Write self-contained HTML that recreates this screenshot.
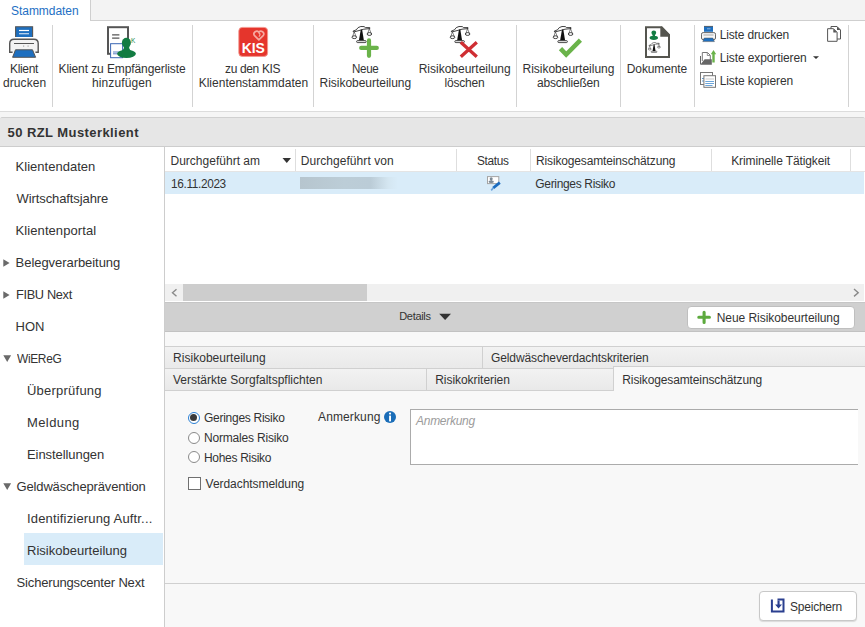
<!DOCTYPE html>
<html lang="de"><head><meta charset="utf-8"><title>Stammdaten</title>
<style>
html,body{margin:0;padding:0}
body{width:865px;height:627px;position:relative;overflow:hidden;background:#fff;font-family:"Liberation Sans",sans-serif;color:#333}
.a{position:absolute}
.t{position:absolute;white-space:pre;color:#333}
.vs{position:absolute;top:25px;height:82px;width:1px;background:#d3d3d3}
svg{position:absolute;overflow:visible}
</style></head><body>
<!-- tab strip -->
<div class="a" style="left:0;top:0;width:865px;height:20px;background:#f3f3f3;border-bottom:1px solid #cfcfcf"></div>
<div class="a" style="left:0;top:0;width:90px;height:21px;background:#fff;border-right:1px solid #cfcfcf"></div>
<!-- ribbon -->
<div class="a" style="left:0;top:111px;width:865px;height:1px;background:#dcdcdc"></div>
<div class="a" style="left:0;top:112px;width:865px;height:5px;background:#f5f5f5"></div>
<div class="vs" style="left:52px"></div><div class="vs" style="left:192px"></div><div class="vs" style="left:313px"></div>
<div class="vs" style="left:516px"></div><div class="vs" style="left:620px"></div><div class="vs" style="left:694px"></div><div class="vs" style="left:848px"></div>
<!-- title bar -->
<div class="a" style="left:0;top:117px;width:865px;height:30px;background:#e6e6e6;border-top:1px solid #d0d0d0;border-bottom:1px solid #cdcdcd;box-sizing:border-box;border-radius:2px 2px 0 0"></div>
<!-- sidebar -->
<div class="a" style="left:164px;top:147px;width:1px;height:480px;background:#cdcdcd"></div>
<div class="a" style="left:24px;top:533px;width:139px;height:32px;background:#d9ecf9"></div>
<!-- grid -->
<div class="a" style="left:165px;top:171px;width:700px;height:1px;background:#e4e4e4"></div>
<div class="a" style="left:165px;top:172px;width:699px;height:22px;background:#d9ecf9"></div>
<div class="a" style="left:295px;top:149px;width:1px;height:22px;background:#dedede"></div>
<div class="a" style="left:456px;top:149px;width:1px;height:22px;background:#dedede"></div>
<div class="a" style="left:530px;top:149px;width:1px;height:22px;background:#dedede"></div>
<div class="a" style="left:711px;top:149px;width:1px;height:22px;background:#dedede"></div>
<div class="a" style="left:850px;top:149px;width:1px;height:22px;background:#dedede"></div>
<div class="a" style="left:300px;top:177px;width:98px;height:12px;background:linear-gradient(90deg,#b6c5ce 0,#bccdd7 45%,#bbccd7 72%,#d4e6f1 90%,#d9ecf9 100%)"></div>
<!-- scrollbar -->
<div class="a" style="left:165px;top:284px;width:699px;height:17px;background:#f0f0f0"></div>
<div class="a" style="left:183px;top:284px;width:184px;height:17px;background:#cdcdcd"></div>
<!-- details bar -->
<div class="a" style="left:165px;top:302px;width:700px;height:30px;background:#d0d0d0;border-top:1px solid #c6c6c6;border-bottom:1px solid #c2c2c2;box-sizing:border-box"></div>
<div class="a" style="left:687px;top:305.5px;width:168px;height:23px;background:#fff;border:1px solid #bfbfbf;border-radius:4px;box-sizing:border-box"></div>
<!-- lower panel -->
<div class="a" style="left:165px;top:332px;width:700px;height:295px;background:#f8f8f8"></div>
<div class="a" style="left:165px;top:346px;width:449px;height:23px;background:linear-gradient(#f2f2f2,#e9e9e9);border-top:1px solid #d0d0d0;box-sizing:border-box"></div>
<div class="a" style="left:613px;top:346px;width:252px;height:21px;background:linear-gradient(#f2f2f2,#eaeaea);border-top:1px solid #d0d0d0;border-bottom:1px solid #d0d0d0;box-sizing:border-box"></div>
<div class="a" style="left:482px;top:347px;width:1px;height:21px;background:#d0d0d0"></div>
<div class="a" style="left:165px;top:368px;width:449px;height:23px;background:linear-gradient(#f2f2f2,#e9e9e9);border-top:1px solid #d0d0d0;border-bottom:1px solid #d0d0d0;box-sizing:border-box"></div>
<div class="a" style="left:426px;top:369px;width:1px;height:21px;background:#d0d0d0"></div>
<div class="a" style="left:613px;top:367px;width:1px;height:24px;background:#d0d0d0"></div>
<!-- form -->
<div class="a" style="left:187.6px;top:411.6px;width:12px;height:12px;border:1px solid #2a7fd4;border-radius:50%;box-sizing:border-box;background:#fff"></div>
<div class="a" style="left:190.1px;top:414.1px;width:7px;height:7px;border-radius:50%;background:#3a3a3a"></div>
<div class="a" style="left:187.6px;top:431.7px;width:12px;height:12px;border:1px solid #8a8a8a;border-radius:50%;box-sizing:border-box;background:#fff"></div>
<div class="a" style="left:187.6px;top:451.4px;width:12px;height:12px;border:1px solid #8a8a8a;border-radius:50%;box-sizing:border-box;background:#fff"></div>
<div class="a" style="left:188px;top:477px;width:13px;height:13px;border:1px solid #707070;box-sizing:border-box;background:#fff"></div>
<div class="a" style="left:410px;top:409px;width:448px;height:56px;border:1px solid #ababab;border-right:0;box-sizing:border-box;background:#fff"></div>
<!-- bottom bar -->
<div class="a" style="left:165px;top:583px;width:700px;height:1px;background:#d0d0d0"></div>
<div class="a" style="left:759px;top:591px;width:98px;height:30px;background:#fff;border:1px solid #c8c8c8;border-radius:4px;box-sizing:border-box;box-shadow:0 1px 1px rgba(0,0,0,.12)"></div>
<svg style="left:0;top:0" width="865" height="627" viewBox="0 0 865 627">
<defs>
<symbol id="sc" overflow="visible">
<path d="M1.2 5.2 L4.5 3.8 L6.3 1.6 L9 .5 L12.3 .6 L13.6 1.6 L18 1.6 L18 2.6 L12 3.2 L9.6 3.9 L1.8 6Z" fill="#fff" stroke="#111" stroke-width=".8" stroke-linejoin="round"/>
<path d="M2.4 5.8 L.8 10.6 M2.4 5.8 L4.3 10.6 M17.5 2.6 L16 7.3 M17.5 2.6 L19.3 7.3" stroke="#222" stroke-width=".55" fill="none"/>
<ellipse cx="2.5" cy="11.2" rx="2.3" ry="1.4" fill="#fff" stroke="#111" stroke-width=".8"/>
<ellipse cx="17.6" cy="8" rx="2.3" ry="1.4" fill="#fff" stroke="#111" stroke-width=".8"/>
<path d="M9 3.6 L10.3 3.6 L12.1 14.6 L7.1 14.6Z" fill="#111"/>
<rect x="4.8" y="14.6" width="9.6" height="2" rx="1" fill="#e8e8e8" stroke="#222" stroke-width=".8"/>
</symbol>
</defs>
<!-- printer -->
<rect x="15.6" y="26.7" width="17" height="10.3" fill="#1e6fbf"/>
<path d="M15.6 37 V26.7 H32.6 V37" fill="none" stroke="#555" stroke-width="1.1"/>
<path d="M19 30.5 H29" stroke="#fff" stroke-width="1.2"/><path d="M19 33.7 H29" stroke="#c9dcf0" stroke-width="1.2"/>
<path d="M12.6 52.3 H9.7 V43.5 Q9.7 39.2 14 39.2 H34 Q38.2 39.2 38.2 43.5 V52.3 H35.4" fill="#f3f3f3" stroke="#555" stroke-width="1.4"/>
<path d="M14 43.5 H34" stroke="#555" stroke-width="1"/>
<rect x="23" y="45.5" width="1.2" height="1.2" fill="#aaa"/><rect x="27.5" y="45.5" width="1.2" height="1.2" fill="#aaa"/>
<path d="M15.5 49.8 H32.5 L35.6 57.3 H12.6Z" fill="#1e6fbf" stroke="#555" stroke-width="1"/>
<!-- doc + person -->
<rect x="108" y="27.2" width="20" height="26.6" fill="#fff" stroke="#555" stroke-width="2"/>
<path d="M112.1 34.9 H119.4 M112.1 38.1 H119.4" stroke="#555" stroke-width="1.3"/>
<rect x="110.6" y="43.7" width="12" height="14" fill="#fff" stroke="#3a66b3" stroke-width="1"/>
<path d="M113 52 H120 M113 53.8 H120" stroke="#5b80c4" stroke-width="1"/>
<ellipse cx="126.4" cy="42.7" rx="4.5" ry="4.9" fill="#127c42"/>
<path d="M123.6 45.5 Q124.8 48 122.6 50.6 H130.4 Q128.4 48 129.4 45.5Z" fill="#127c42"/>
<ellipse cx="126.5" cy="53.8" rx="9.4" ry="4.1" fill="#127c42"/>
<text x="131" y="42.7" font-family="Liberation Sans, sans-serif" font-size="6.5" fill="#1d8a4e">K</text>
<!-- KIS -->
<rect x="238.8" y="27.4" width="28.8" height="29" rx="3.5" fill="#e5352c" stroke="#f4978e" stroke-width=".9"/>
<path d="M258.85 39.9 L254.3 35.4 A2.8 2.8 0 0 1 258.85 32.2 A2.8 2.8 0 0 1 263.4 35.4Z" fill="none" stroke="#f6a8a0" stroke-width="1.7" stroke-linejoin="round"/>
<path d="M258.6 32.6 q2.6 1.6 .3 4" fill="none" stroke="#f6a8a0" stroke-width="1.3"/>
<text x="241.7" y="52.6" font-family="Liberation Sans, sans-serif" font-weight="bold" font-size="14" fill="#fff" textLength="23.2" lengthAdjust="spacingAndGlyphs">KIS</text>
<!-- neue -->
<use href="#sc" x="351.8" y="26"/>
<path d="M361.2 47.9 H376.8 M369 40.4 V55.8" stroke="#6ab34a" stroke-width="4.2" stroke-linecap="round"/>
<!-- loeschen -->
<use href="#sc" x="450" y="26"/>
<path d="M460.8 42.2 L476.8 56.8 M476.8 42.2 L460.8 56.8" stroke="#cf2e33" stroke-width="3.3"/>
<!-- abschliessen -->
<use href="#sc" x="553" y="26"/>
<path d="M560.5 48.6 L566.2 54.6 L580.4 40.2" fill="none" stroke="#6ab34a" stroke-width="4.5"/>
<!-- dokumente -->
<path d="M646 27.2 H661.6 L669 34.8 V56.9 H646Z" fill="#fff" stroke="#55554f" stroke-width="2"/>
<path d="M660.3 27.2 L661.9 26.4 L669.8 34.5 V36.7 H660.3Z" fill="#55554f"/>
<circle cx="653.8" cy="32.8" r="2.4" fill="#127c42"/><rect x="652.6" y="34" width="2.4" height="3" fill="#127c42"/>
<ellipse cx="653.8" cy="37.8" rx="4.2" ry="2.1" fill="#127c42"/>
<g transform="translate(648.2 42.3) scale(.61)"><use href="#sc"/></g>
<!-- liste drucken -->
<rect x="704" y="26.2" width="9" height="5.6" fill="#1e6fbf"/><path d="M704 26.4 H713" stroke="#555" stroke-width=".8"/>
<path d="M707 28.8 H710.5" stroke="#8db4dd" stroke-width="1"/>
<rect x="701.5" y="32.6" width="14" height="7" rx="1.6" fill="#f6f6f6" stroke="#666" stroke-width="1"/>
<path d="M703.5 35 H713.5" stroke="#888" stroke-width=".7"/>
<path d="M704.2 38 H712.8 L714.4 41.6 H702.8Z" fill="#1e6fbf" stroke="#555" stroke-width=".5"/>
<!-- liste exportieren -->
<path d="M702.3 61 V52.5 H707.5 L710.3 55.3 V60" fill="#fff" stroke="#777" stroke-width="1"/>
<path d="M707.3 52.8 V55.5 H710" fill="none" stroke="#777" stroke-width=".8"/>
<path d="M700.5 56 V64.3" stroke="#666" stroke-width="1"/>
<path d="M700.3 64.7 L704.6 59.3 H711.8 V64.7Z" fill="#666"/>
<path d="M713.5 50 L716.2 54.2 H714.7 V62.6 H712.3 V54.2 H710.8Z" fill="#6ab34a"/>
<!-- liste kopieren -->
<rect x="700.5" y="72.5" width="12" height="12" fill="#fff" stroke="#777" stroke-width="1"/>
<path d="M702 78.5 H704 M702 81 H704" stroke="#5b9bd5" stroke-width="1"/>
<rect x="703.9" y="75.7" width="11.6" height="11.6" fill="#fff" stroke="#777" stroke-width="1"/>
<path d="M705.5 79 H714" stroke="#bbb" stroke-width=".8"/>
<path d="M705.3 81.5 H714 M705.3 83.5 H714 M705.3 85.5 H712.5" stroke="#5b9bd5" stroke-width=".9"/>
<!-- pages -->
<path d="M831 39 V26.5 H837 L840.5 30 V39Z" fill="#fff" stroke="#555" stroke-width="1"/><path d="M837 26.5 V30 H840.5Z" fill="#555"/>
<path d="M827.6 28.7 H833.5 L837.1 32.3 V41.3 H827.6Z" fill="#fff" stroke="#555" stroke-width="1"/><path d="M833.3 28.7 V32.5 H837.1Z" fill="#555"/>
<path d="M813 56.2 H819 L816 59Z" fill="#333"/>
<!-- sort / details arrows -->
<path d="M282.5 158 H291 L286.75 163Z" fill="#333"/>
<path d="M439.2 313.7 H451 L445.1 320Z" fill="#333"/>
<!-- sidebar triangles -->
<path d="M3.3 259.2 L9.6 263 L3.3 266.8Z M3.3 291.2 L9.6 295 L3.3 298.8Z" fill="#6a6a6a"/>
<path d="M3.3 355.3 H11.1 L7.2 362Z M3.3 483.3 H11.1 L7.2 490Z" fill="#6a6a6a"/>
<!-- scroll arrows -->
<path d="M176.5 289.2 L172.5 292.7 L176.5 296.2" fill="none" stroke="#8a8a8a" stroke-width="1.4"/>
<path d="M854 289 L858.2 292.7 L854 296.4" fill="none" stroke="#8a8a8a" stroke-width="1.4"/>
<!-- status icon -->
<rect x="487.5" y="176.6" width="11.3" height="7" fill="#fff" stroke="#a4a4a4" stroke-width="1"/>
<circle cx="491.2" cy="178.7" r="1.5" fill="#7d8a96"/><rect x="490.6" y="179.5" width="1.2" height="1.8" fill="#7d8a96"/><ellipse cx="491.2" cy="181.8" rx="2.7" ry="1.3" fill="#7d8a96"/>
<path d="M499.8 182.6 L493.2 188" stroke="#1a6bbf" stroke-width="2.9"/><path d="M493.4 187.8 L491.2 190.4" stroke="#6ba3dc" stroke-width="1.7"/>
<!-- small plus -->
<path d="M698.8 317.3 H709.4 M704.1 312.2 V322.4" stroke="#5daa3e" stroke-width="3.1" stroke-linecap="round"/>
<!-- info -->
<circle cx="390" cy="417" r="6" fill="#1a6db8"/><rect x="389.1" y="415.6" width="1.9" height="5.8" fill="#fff"/><circle cx="390.05" cy="413.6" r="1.1" fill="#fff"/>
<!-- save -->
<path d="M777.5 599.5 H783.5 V611.4 H771.9 V599.5" fill="none" stroke="#2a3f8f" stroke-width="2"/>
<path d="M777.5 600.5 H779.6 V604.6 H782 L778.55 608.6 L775.1 604.6 H777.5Z" fill="#2a3f8f"/>
</svg>

<span class="t" style="left:11.0px;top:2.6px;font-size:12px;line-height:16px;letter-spacing:-0.040px;color:#1e6fc4">Stammdaten</span>
<span class="t" style="left:10.0px;top:61.0px;font-size:12px;line-height:16px;letter-spacing:-0.337px;">Klient</span>
<span class="t" style="left:3.0px;top:75.0px;font-size:12px;line-height:16px;letter-spacing:0.080px;">drucken</span>
<span class="t" style="left:58.5px;top:61.0px;font-size:12px;line-height:16px;letter-spacing:-0.097px;">Klient zu Empfängerliste</span>
<span class="t" style="left:92.0px;top:75.0px;font-size:12px;line-height:16px;letter-spacing:0.106px;">hinzufügen</span>
<span class="t" style="left:225.0px;top:61.0px;font-size:12px;line-height:16px;letter-spacing:-0.350px;;transform:scaleX(0.9991);transform-origin:0 0">zu den KIS</span>
<span class="t" style="left:198.7px;top:75.0px;font-size:12px;line-height:16px;letter-spacing:0.005px;">Klientenstammdaten</span>
<span class="t" style="left:352.0px;top:61.0px;font-size:12px;line-height:16px;letter-spacing:-0.350px;;transform:scaleX(0.9655);transform-origin:0 0">Neue</span>
<span class="t" style="left:319.5px;top:75.0px;font-size:12px;line-height:16px;letter-spacing:-0.024px;">Risikobeurteilung</span>
<span class="t" style="left:418.7px;top:61.0px;font-size:12px;line-height:16px;letter-spacing:-0.005px;">Risikobeurteilung</span>
<span class="t" style="left:444.5px;top:75.0px;font-size:12px;line-height:16px;letter-spacing:-0.198px;">löschen</span>
<span class="t" style="left:522.5px;top:61.0px;font-size:12px;line-height:16px;letter-spacing:-0.011px;">Risikobeurteilung</span>
<span class="t" style="left:537.0px;top:75.0px;font-size:12px;line-height:16px;letter-spacing:-0.203px;">abschließen</span>
<span class="t" style="left:626.8px;top:61.0px;font-size:12px;line-height:16px;letter-spacing:-0.124px;">Dokumente</span>
<span class="t" style="left:719.7px;top:27.0px;font-size:12px;line-height:16px;letter-spacing:-0.150px;">Liste drucken</span>
<span class="t" style="left:719.7px;top:50.0px;font-size:12px;line-height:16px;letter-spacing:-0.109px;">Liste exportieren</span>
<span class="t" style="left:719.7px;top:73.0px;font-size:12px;line-height:16px;letter-spacing:-0.095px;">Liste kopieren</span>
<span class="t" style="left:7.6px;top:123.7px;font-size:13px;line-height:17px;letter-spacing:0.422px;font-weight:bold">50 RZL Musterklient</span>
<span class="t" style="left:170.5px;top:153.0px;font-size:12px;line-height:16px;letter-spacing:0.009px;">Durchgeführt am</span>
<span class="t" style="left:300.7px;top:153.0px;font-size:12px;line-height:16px;letter-spacing:0.062px;">Durchgeführt von</span>
<span class="t" style="left:477.2px;top:153.0px;font-size:12px;line-height:16px;letter-spacing:-0.350px;;transform:scaleX(0.9854);transform-origin:0 0">Status</span>
<span class="t" style="left:536.0px;top:153.0px;font-size:12px;line-height:16px;letter-spacing:-0.146px;">Risikogesamteinschätzung</span>
<span class="t" style="left:731.2px;top:153.0px;font-size:12px;line-height:16px;letter-spacing:-0.118px;">Kriminelle Tätigkeit</span>
<span class="t" style="left:170.5px;top:175.5px;font-size:12px;line-height:16px;letter-spacing:-0.350px;;transform:scaleX(0.9850);transform-origin:0 0">16.11.2023</span>
<span class="t" style="left:535.3px;top:175.5px;font-size:12px;line-height:16px;letter-spacing:-0.330px;">Geringes Risiko</span>
<span class="t" style="left:399.2px;top:308.9px;font-size:11px;line-height:15px;letter-spacing:-0.304px;">Details</span>
<span class="t" style="left:716.7px;top:309.7px;font-size:12px;line-height:16px;letter-spacing:-0.052px;">Neue Risikobeurteilung</span>
<span class="t" style="left:173.0px;top:349.7px;font-size:12px;line-height:16px;letter-spacing:0.039px;">Risikobeurteilung</span>
<span class="t" style="left:491.0px;top:349.7px;font-size:12px;line-height:16px;letter-spacing:-0.114px;">Geldwäscheverdachtskriterien</span>
<span class="t" style="left:173.0px;top:371.8px;font-size:12px;line-height:16px;letter-spacing:-0.001px;">Verstärkte Sorgfaltspflichten</span>
<span class="t" style="left:435.2px;top:371.8px;font-size:12px;line-height:16px;letter-spacing:-0.048px;">Risikokriterien</span>
<span class="t" style="left:622.3px;top:371.8px;font-size:12px;line-height:16px;letter-spacing:-0.125px;">Risikogesamteinschätzung</span>
<span class="t" style="left:204.0px;top:409.5px;font-size:12px;line-height:16px;letter-spacing:-0.273px;">Geringes Risiko</span>
<span class="t" style="left:204.0px;top:429.5px;font-size:12px;line-height:16px;letter-spacing:-0.191px;">Normales Risiko</span>
<span class="t" style="left:204.0px;top:449.5px;font-size:12px;line-height:16px;letter-spacing:-0.302px;">Hohes Risiko</span>
<span class="t" style="left:205.6px;top:475.7px;font-size:12px;line-height:16px;letter-spacing:-0.048px;">Verdachtsmeldung</span>
<span class="t" style="left:318.0px;top:409.0px;font-size:12px;line-height:16px;letter-spacing:0.126px;">Anmerkung</span>
<span class="t" style="left:416.0px;top:413.0px;font-size:12px;line-height:16px;letter-spacing:-0.274px;font-style:italic;color:#9c9c9c">Anmerkung</span>
<span class="t" style="left:790.0px;top:598.5px;font-size:12px;line-height:16px;letter-spacing:-0.220px;">Speichern</span>
<span class="t" style="left:15.6px;top:157.8px;font-size:13px;line-height:17px;letter-spacing:0.010px;">Klientendaten</span>
<span class="t" style="left:16.6px;top:189.8px;font-size:13px;line-height:17px;letter-spacing:-0.104px;">Wirtschaftsjahre</span>
<span class="t" style="left:15.6px;top:221.8px;font-size:13px;line-height:17px;letter-spacing:0.076px;">Klientenportal</span>
<span class="t" style="left:15.6px;top:253.8px;font-size:13px;line-height:17px;letter-spacing:-0.055px;">Belegverarbeitung</span>
<span class="t" style="left:15.6px;top:285.8px;font-size:13px;line-height:17px;letter-spacing:-0.350px;;transform:scaleX(0.9833);transform-origin:0 0">FIBU Next</span>
<span class="t" style="left:15.6px;top:317.8px;font-size:13px;line-height:17px;letter-spacing:-0.050px;">HON</span>
<span class="t" style="left:16.6px;top:349.8px;font-size:13px;line-height:17px;letter-spacing:-0.350px;;transform:scaleX(0.9159);transform-origin:0 0">WiEReG</span>
<span class="t" style="left:27.0px;top:381.8px;font-size:13px;line-height:17px;letter-spacing:0.226px;">Überprüfung</span>
<span class="t" style="left:27.0px;top:413.8px;font-size:13px;line-height:17px;letter-spacing:0.394px;">Meldung</span>
<span class="t" style="left:27.0px;top:445.8px;font-size:13px;line-height:17px;letter-spacing:-0.069px;">Einstellungen</span>
<span class="t" style="left:16.6px;top:477.8px;font-size:13px;line-height:17px;letter-spacing:-0.164px;">Geldwäscheprävention</span>
<span class="t" style="left:27.0px;top:509.8px;font-size:13px;line-height:17px;letter-spacing:0.169px;">Identifizierung Auftr...</span>
<span class="t" style="left:27.0px;top:541.8px;font-size:13px;line-height:17px;letter-spacing:0.019px;">Risikobeurteilung</span>
<span class="t" style="left:16.6px;top:573.8px;font-size:13px;line-height:17px;letter-spacing:-0.175px;">Sicherungscenter Next</span>
</body></html>
